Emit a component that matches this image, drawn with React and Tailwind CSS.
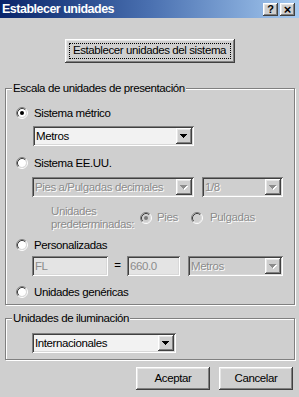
import React from 'react';

const RAISED =
  'shadow-[inset_-1px_-1px_0_#404040,inset_1px_1px_0_#ffffff,inset_-2px_-2px_0_#808080,inset_2px_2px_0_#e6e6e6]';
const SUNKEN =
  'shadow-[inset_1px_1px_0_#808080,inset_-1px_-1px_0_#ffffff,inset_2px_2px_0_#404040,inset_-2px_-2px_0_#d8d8d8]';
const GREY_TEXT = 'text-[#8c8c8c] [text-shadow:1px_1px_0_#ffffff]';

function Radio({ checked, disabled }) {
  return (
    <svg width="12" height="12" viewBox="0 0 12 12" className="shrink-0">
      <circle cx="6" cy="6" r="4" fill={disabled ? '#cfcfcf' : '#ffffff'} />
      <path d="M2.11 9.89 A5.5 5.5 0 0 1 9.89 2.11" stroke="#808080" fill="none" />
      <path d="M9.89 2.11 A5.5 5.5 0 0 1 2.11 9.89" stroke="#ffffff" fill="none" />
      <path d="M2.82 9.18 A4.5 4.5 0 0 1 9.18 2.82" stroke="#404040" fill="none" />
      <path d="M9.18 2.82 A4.5 4.5 0 0 1 2.82 9.18" stroke="#dcdcdc" fill="none" />
      {checked && <circle cx="6" cy="6" r="2" fill={disabled ? '#7a7a7a' : '#000000'} />}
    </svg>
  );
}

function Arrow({ disabled }) {
  const c = disabled ? '#8c8c8c' : '#000000';
  const rows = [
    [0, 7],
    [1, 5],
    [2, 3],
    [3, 1],
  ];
  return (
    <svg width="8" height="5" viewBox="0 0 8 5" shapeRendering="crispEdges">
      {disabled &&
        rows.map(([y, w], i) => (
          <rect key={'s' + i} x={i + 1} y={y + 1} width={w} height="1" fill="#ffffff" />
        ))}
      {rows.map(([y, w], i) => (
        <rect key={i} x={i} y={y} width={w} height="1" fill={c} />
      ))}
    </svg>
  );
}

function Combo({ w, value, disabled }) {
  return (
    <div
      className={`${w} h-[20px] flex items-center p-[2px] ${SUNKEN} ${
        disabled ? 'bg-[#cfcfcf]' : 'bg-[#f2f2f2]'
      }`}
    >
      <span className={`flex-1 pl-[1px] leading-[16px] overflow-hidden ${disabled ? GREY_TEXT : 'text-black'}`}>
        {value}
      </span>
      <span className={`w-[16px] h-[16px] shrink-0 bg-[#cfcfcf] flex items-center justify-center ${RAISED}`}>
        <Arrow disabled={disabled} />
      </span>
    </div>
  );
}

function Field({ w, value }) {
  return (
    <div className={`${w} h-[20px] flex items-center p-[2px] bg-[#e4e4e4] ${SUNKEN}`}>
      <span className="pl-[1px] leading-[16px] text-[#8c8c8c]">{value}</span>
    </div>
  );
}

function RadioRow({ label, checked, className }) {
  return (
    <div className={`h-[16px] flex items-center gap-[6px] ml-[10px] ${className}`}>
      <Radio checked={checked} />
      <span className="leading-[16px]">{label}</span>
    </div>
  );
}

function Button({ children, className }) {
  return (
    <button className={`h-[23px] bg-[#cfcfcf] flex items-center justify-center ${RAISED} ${className}`}>
      {children}
    </button>
  );
}

export default function App() {
  return (
    <div className="w-[299px] h-[397px] bg-[#cfcfcf] flex flex-col overflow-hidden whitespace-nowrap text-[11.5px] tracking-[-0.4px] text-black font-['Liberation_Sans',Arial,sans-serif]">
      <div className="h-[18px] flex items-center justify-between pl-[2px] pr-[4px] bg-linear-to-r from-[#0a246a] via-[#4a70b0] to-[#a6caf0]">
        <span className="text-white font-bold text-[12.5px] tracking-[-0.5px] leading-[18px]">
          Establecer unidades
        </span>
        <div className="flex gap-[2px] tracking-normal">
          <span className={`w-[15px] h-[13px] bg-[#cfcfcf] flex items-center justify-center text-[11px] font-bold leading-none ${RAISED}`}>
            ?
          </span>
          <span className={`w-[15px] h-[13px] bg-[#cfcfcf] flex items-center justify-center text-[13px] font-bold leading-none ${RAISED}`}>
            ×
          </span>
        </div>
      </div>

      <Button className="mt-[21px] self-center w-[170px] h-[24px] p-[4px] shadow-[inset_-1px_-1px_0_#000000,inset_1px_1px_0_#ffffff,inset_-2px_-2px_0_#808080,inset_2px_2px_0_#e6e6e6]">
        <span className="w-full h-full border border-dotted border-black flex items-center justify-center">
          Establecer unidades del sistema
        </span>
      </Button>

      <fieldset className="mt-[18px] ml-[5px] w-[290px] border border-[#808080] shadow-[1px_1px_0_#ffffff,inset_1px_1px_0_#ffffff] pb-[4px]">
        <legend className="ml-[6px] px-[1px] leading-[15px] bg-[#cfcfcf]">
          Escala de unidades de presentación
        </legend>

        <RadioRow className="mt-[9px]" label="Sistema métrico" checked />
        <div className="mt-[5px] ml-[27px]">
          <Combo w="w-[161px]" value="Metros" />
        </div>

        <RadioRow className="mt-[9px]" label="Sistema EE.UU." />
        <div className="mt-[6px] ml-[26px] flex gap-[8px]">
          <Combo w="w-[162px]" value="Pies a/Pulgadas decimales" disabled />
          <Combo w="w-[81px]" value="1/8" disabled />
        </div>

        <div className="mt-[8px] ml-[45px] flex items-center">
          <div className={`leading-[13px] w-[89px] ${GREY_TEXT}`}>
            Unidades
            <br />
            predeterminadas:
          </div>
          <div className="w-[51px] flex items-center gap-[5px]">
            <Radio checked disabled />
            <span className={GREY_TEXT}>Pies</span>
          </div>
          <div className="flex items-center gap-[7px]">
            <Radio disabled />
            <span className={GREY_TEXT}>Pulgadas</span>
          </div>
        </div>

        <RadioRow className="mt-[6px]" label="Personalizadas" />
        <div className="mt-[3px] ml-[26px] flex items-center">
          <Field w="w-[76px]" value="FL" />
          <span className="w-[19px] text-center">=</span>
          <Field w="w-[53px]" value="660.0" />
          <div className="ml-[8px]">
            <Combo w="w-[95px]" value="Metros" disabled />
          </div>
        </div>

        <RadioRow className="mt-[8px]" label="Unidades genéricas" />
      </fieldset>

      <fieldset className="mt-[6px] ml-[5px] w-[290px] border border-[#808080] shadow-[1px_1px_0_#ffffff,inset_1px_1px_0_#ffffff] pb-[6px]">
        <legend className="ml-[6px] px-[1px] leading-[15px] bg-[#cfcfcf]">Unidades de iluminación</legend>
        <div className="mt-[7px] ml-[26px]">
          <Combo w="w-[144px]" value="Internacionales" />
        </div>
      </fieldset>

      <div className="mt-[7px] flex justify-end gap-[9px] pr-[6px]">
        <Button className="w-[74px]">Aceptar</Button>
        <Button className="w-[74px]">Cancelar</Button>
      </div>
    </div>
  );
}
